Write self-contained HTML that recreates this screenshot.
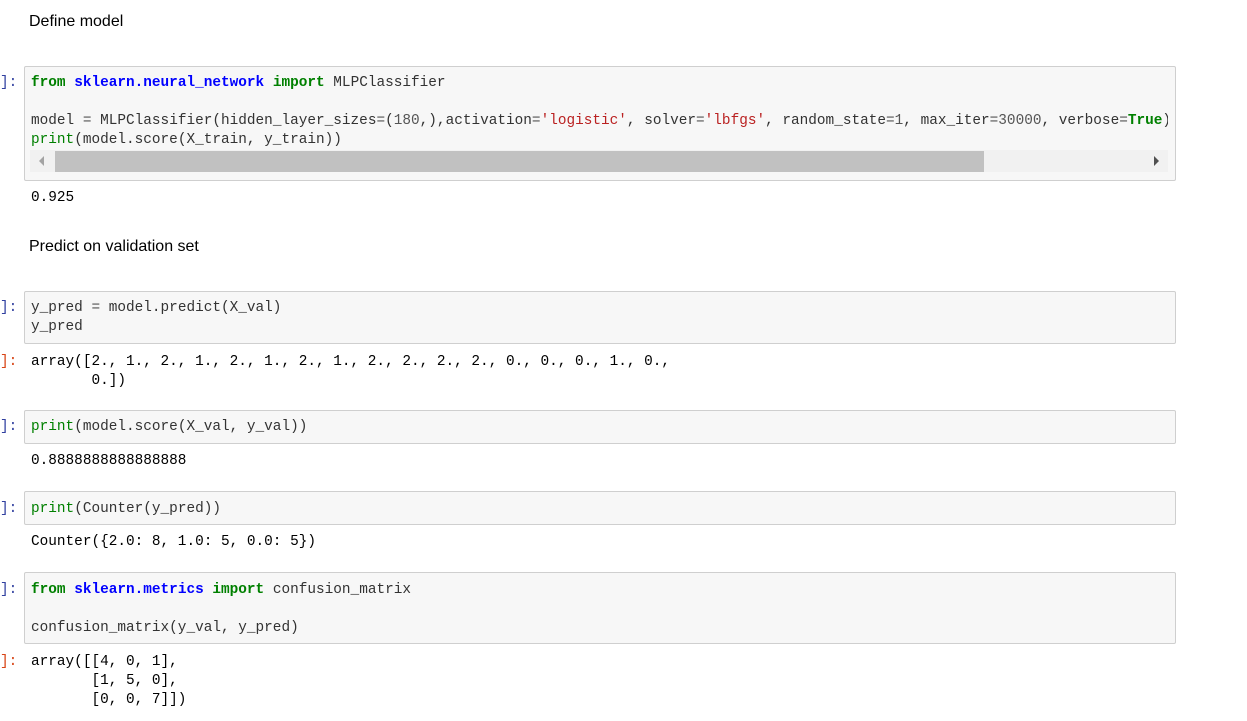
<!DOCTYPE html>
<html><head><meta charset="utf-8"><style>
body{margin:0;width:1247px;height:721px;background:#fff;position:relative;overflow:hidden;font-family:"Liberation Mono",monospace;}
.l{position:absolute;left:31px;font-size:14.4px;line-height:19px;white-space:pre;color:#333;}
.p{position:absolute;left:0;font-size:14.4px;line-height:19px;white-space:pre;color:#303f9f;}
.po{color:#d84315;}
.t{position:absolute;left:29px;font-family:"Liberation Sans",sans-serif;font-size:16px;line-height:20px;color:#000;}
.box{position:absolute;left:24px;width:1150px;background:#f7f7f7;border:1px solid #cfcfcf;border-radius:2px;}
.k{color:#008000;font-weight:bold;}
.n{color:#0000ff;font-weight:bold;}
.b{color:#008000;}
.s{color:#ba2121;}
.o{color:#555;}
</style></head><body>
<div class="t" style="top:12px">Define model</div>
<div class="box" style="top:66px;height:113px"></div>
<div style="position:absolute;left:30px;top:150px;width:1138px;height:22px;background:#f1f1f1"></div>
<div style="position:absolute;left:55px;top:151px;width:929px;height:21px;background:#c1c1c1"></div>
<div style="position:absolute;left:39px;top:156px;width:0;height:0;border-top:5px solid transparent;border-bottom:5px solid transparent;border-right:5px solid #a3a3a3"></div>
<div style="position:absolute;left:1154px;top:156px;width:0;height:0;border-top:5px solid transparent;border-bottom:5px solid transparent;border-left:5px solid #505050"></div>
<div class="p" style="top:74px">]:</div>
<div class="l" style="top:74px"><span class="k">from</span> <span class="n">sklearn.neural_network</span> <span class="k">import</span> MLPClassifier</div>
<div class="l" style="top:112px;width:1137px;overflow:hidden">model <span class="o">=</span> MLPClassifier(hidden_layer_sizes<span class="o">=</span>(<span class="o">180</span>,),activation<span class="o">=</span><span class="s">'logistic'</span>, solver<span class="o">=</span><span class="s">'lbfgs'</span>, random_state<span class="o">=1</span>, max_iter<span class="o">=30000</span>, verbose<span class="o">=</span><span class="k">True</span>)</div>
<div class="l" style="top:131px"><span class="b">print</span>(model.score(X_train, y_train))</div>
<div class="l" style="top:189px;color:#000">0.925</div>
<div class="t" style="top:237px">Predict on validation set</div>

<div class="box" style="top:291px;height:51px"></div>
<div class="p" style="top:299px">]:</div>
<div class="l" style="top:299px">y_pred <span class="o">=</span> model.predict(X_val)</div>
<div class="l" style="top:318px">y_pred</div>
<div class="p po" style="top:353px">]:</div>
<div class="l" style="top:353px;color:#000">array([2., 1., 2., 1., 2., 1., 2., 1., 2., 2., 2., 2., 0., 0., 0., 1., 0.,
       0.])</div>

<div class="box" style="top:410px;height:32px"></div>
<div class="p" style="top:418px">]:</div>
<div class="l" style="top:418px"><span class="b">print</span>(model.score(X_val, y_val))</div>
<div class="l" style="top:452px;color:#000">0.8888888888888888</div>

<div class="box" style="top:491px;height:32px"></div>
<div class="p" style="top:500px">]:</div>
<div class="l" style="top:500px"><span class="b">print</span>(Counter(y_pred))</div>
<div class="l" style="top:533px;color:#000">Counter({2.0: 8, 1.0: 5, 0.0: 5})</div>

<div class="box" style="top:572px;height:70px"></div>
<div class="p" style="top:581px">]:</div>
<div class="l" style="top:581px"><span class="k">from</span> <span class="n">sklearn.metrics</span> <span class="k">import</span> confusion_matrix</div>
<div class="l" style="top:619px">confusion_matrix(y_val, y_pred)</div>
<div class="p po" style="top:653px">]:</div>
<div class="l" style="top:653px;color:#000">array([[4, 0, 1],
       [1, 5, 0],
       [0, 0, 7]])</div>
</body></html>
